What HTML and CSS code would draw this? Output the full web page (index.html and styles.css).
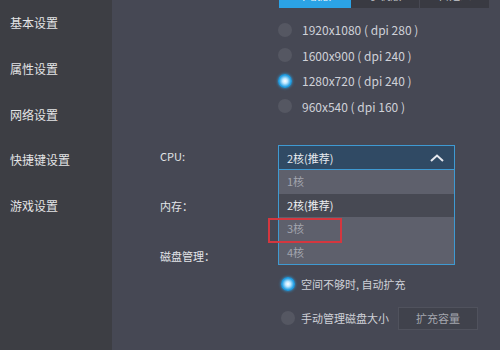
FILE: index.html
```html
<!DOCTYPE html>
<html lang="zh-CN">
<head>
    <meta charset="UTF-8">
    <title>设置</title>
    <link rel="stylesheet" href="styles.css">
</head>
<body>
<div class="window">
    <div class="sidebar">
        <p class="nav-item">基本设置</p>
        <p class="nav-item">属性设置</p>
        <p class="nav-item">网络设置</p>
        <p class="nav-item">快捷键设置</p>
        <p class="nav-item">游戏设置</p>
    </div>
    <div class="main">
        <div class="tabs">
            <span class="tab active">平板版</span>
            <span class="tab">手机版</span>
            <span class="tab">自定义</span>
        </div>
        <div class="resolutions">
            <label class="radio"><i class="dot"></i>1920x1080 ( dpi 280 )</label>
            <label class="radio"><i class="dot"></i>1600x900 ( dpi 240 )</label>
            <label class="radio"><i class="dot on"></i>1280x720 ( dpi 240 )</label>
            <label class="radio"><i class="dot"></i>960x540 ( dpi 160 )</label>
        </div>
        <div class="form">
            <div class="row">
                <span class="label">CPU:</span>
                <div class="select">
                    <div class="select-head">
                        <span>2核(推荐)</span>
                        <svg class="caret" width="14" height="8" viewBox="0 0 14 8"><path d="M1 7 L7 1.5 L13 7" fill="none" stroke="#e6e8ee" stroke-width="2"/></svg>
                    </div>
                    <ul class="options">
                        <li>1核</li>
                        <li class="current">2核(推荐)</li>
                        <li>3核</li>
                        <li>4核</li>
                    </ul>
                    <div class="mark"></div>
                </div>
            </div>
            <div class="row">
                <span class="label">内存：</span>
            </div>
            <div class="row">
                <span class="label">磁盘管理：</span>
            </div>
            <div class="disk">
                <label class="radio"><i class="dot on"></i>空间不够时, 自动扩充</label>
                <label class="radio"><i class="dot"></i>手动管理磁盘大小<span class="btn">扩充容量</span></label>
            </div>
        </div>
    </div>
</div>
</body>
</html>
```

FILE: styles.css
```css
body {
    margin: 0;
    font-family: "Noto Sans CJK SC", "Noto Sans", sans-serif;
    font-size: 11px;
    color: #d6d8de;
    overflow: hidden;
}
.window {
    display: flex;
    width: 500px;
    height: 350px;
    background-color: #464854;
}
.sidebar {
    width: 112px;
    background-color: #3d3e44;
    padding-top: 11px;
    box-sizing: border-box;
}
.nav-item {
    margin: 0 0 22.8px 10px;
    height: 23px;
    line-height: 23px;
    font-size: 12px;
    color: #e4e4e6;
}
.main {
    flex: 1;
    position: relative;
}
.tabs {
    display: flex;
    margin: -18px 0 0 167px;
    width: 211px;
    height: 26px;
    background-color: #393a42;
}
.tab {
    width: 70px;
    text-align: center;
    line-height: 26px;
    color: #c8cad0;
    border-right: 1px solid #474852;
}
.tab.active {
    width: 73px;
    background-color: #2ba3e6;
    color: #ffffff;
    border: none;
}
.resolutions {
    display: flex;
    flex-direction: column;
    padding: 9px 0 0 166px;
    font-size: 12px;
}
.radio {
    display: flex;
    align-items: center;
    height: 25.5px;
    color: #cfd1d8;
}
.dot {
    width: 14px;
    height: 14px;
    border-radius: 50%;
    background-color: #555762;
    margin-right: 10px;
}
.dot.on {
    background: radial-gradient(circle, #ffffff 0, #bfe8ff 25%, #1f9de2 60%, #1a86c6 100%);
    box-shadow: 0 0 3px #2aa7ee;
}
.form {
    padding: 12px 0 0 48px;
}
.row {
    display: flex;
    height: 50px;
}
.row:last-of-type .label {
    padding-top: 14px;
}
.label {
    width: 118px;
    padding-top: 15px;
    line-height: 20px;
    color: #e2e4e8;
}
.select {
    position: relative;
    width: 177px;
    margin-top: 14px;
    z-index: 2;
}
.select-head {
    display: flex;
    justify-content: space-between;
    align-items: center;
    height: 23px;
    padding: 0 10px 0 8px;
    background-color: #304a64;
    border: 1px solid #3f9ad2;
    color: #e8eaf0;
}
.options {
    list-style: none;
    margin: 0;
    padding: 0;
    background-color: #5e606c;
    border: 1px solid #3f9ad2;
    border-top: none;
}
.options li {
    height: 23.5px;
    line-height: 23.5px;
    padding-left: 8px;
    color: #a2a4ae;
}
.options li.current {
    background-color: #474953;
    color: #eeeff2;
}
.mark {
    position: absolute;
    left: -10px;
    top: 73px;
    width: 70px;
    height: 21px;
    border: 2px solid #d4373f;
}
.disk {
    display: flex;
    flex-direction: column;
    gap: 8px;
    padding: 0 0 0 121px;
    margin-top: -10px;
}
.disk .radio {
    height: 26px;
}
.disk .dot {
    margin-right: 6px;
}
.btn {
    margin-left: 9px;
    width: 78px;
    height: 21px;
    line-height: 21px;
    text-align: center;
    background-color: #40424c;
    border: 1px solid #50525d;
    color: #a4a6ae;
}
```
